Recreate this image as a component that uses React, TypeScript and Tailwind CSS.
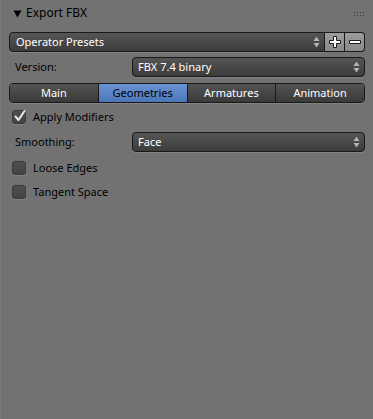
import React from "react";

const font = { fontFamily: '"Noto Sans", "Open Sans", sans-serif' };

function UpDown() {
  return (
    <svg width="7" height="12" viewBox="0 0 7 12" className="shrink-0">
      <path d="M3.5 0.5 L6.5 5 L0.5 5 Z" fill="#b4b4b4" />
      <path d="M3.5 11.5 L6.5 7 L0.5 7 Z" fill="#b4b4b4" />
    </svg>
  );
}

function Dropdown({ label, className = "" }: { label: string; className?: string }) {
  return (
    <div
      className={`h-[20px] flex items-center justify-between pl-[5px] pr-[4px] rounded-[4px] border border-[#191919] bg-gradient-to-b from-[#555555] to-[#3c3c3c] text-[#ffffff] shadow-[0_1px_0_rgba(255,255,255,0.12)] ${className}`}
    >
      <span>{label}</span>
      <UpDown />
    </div>
  );
}

function Checkbox({ checked }: { checked?: boolean }) {
  return (
    <div className="relative w-[14px] h-[14px] rounded-[3px] border border-[#3a3a3a] bg-gradient-to-b from-[#4f4f4f] to-[#434343] shrink-0 shadow-[0_1px_0_rgba(255,255,255,0.1)]">
      {checked && (
        <svg width="14" height="14" viewBox="0 0 14 14" className="absolute left-[0px] top-[-2px]">
          <path d="M2.5 7.5 L5.5 11 L11.5 2" fill="none" stroke="#ececec" strokeWidth="2" strokeLinejoin="round" strokeLinecap="round" />
        </svg>
      )}
    </div>
  );
}

function Tab({ label, active, first, last }: { label: string; active?: boolean; first?: boolean; last?: boolean }) {
  const round = first ? "rounded-l-[3px]" : last ? "rounded-r-[3px]" : "";
  const bg = active
    ? "bg-gradient-to-b from-[#6a93d3] to-[#4c76b8] text-[#000000]"
    : "bg-gradient-to-b from-[#535353] to-[#3a3a3a] text-[#ffffff]";
  return (
    <div className={`flex-1 h-full flex items-center justify-center border-r border-[#191919] last:border-r-0 ${round} ${bg}`}>
      {label}
    </div>
  );
}

export default function App() {
  return (
    <div
      className="w-[373px] h-[419px] bg-[#727272] text-[11px] overflow-hidden border-l border-[#7a7a7a]"
      style={font}
    >
      <div className="h-[26px] flex items-center pl-[12px] pr-[9px] text-[#000000] text-[12px]">
        <svg width="9" height="8" viewBox="0 0 9 8" className="mt-[1px]">
          <path d="M0.5 0.5 L8.5 0.5 L4.5 7.5 Z" fill="#000" />
        </svg>
        <span className="ml-[4px]">Export FBX</span>
        <div className="ml-auto grid grid-cols-4 gap-x-[2px] gap-y-[2px] mt-[1px]">
          {Array.from({ length: 8 }).map((_, i) => (
            <div key={i} className="w-[1px] h-[1px] bg-[#3a3a3a]" />
          ))}
        </div>
      </div>

      <div className="px-[8px]">
        <div className="mt-[6px] h-[20px] flex">
          <div className="flex-1 h-full flex items-center justify-between pl-[6px] pr-[4px] rounded-l-[4px] border border-[#191919] bg-gradient-to-b from-[#555555] to-[#3c3c3c] text-white shadow-[0_1px_0_rgba(255,255,255,0.12)]">
            <span>Operator Presets</span>
            <UpDown />
          </div>
          <div className="w-[20px] h-full flex items-center justify-center border-y border-r border-[#191919] bg-gradient-to-b from-[#9c9c9c] to-[#8a8a8a]">
            <svg width="14" height="14" viewBox="0 0 14 14">
              <path d="M5.5 1.5 H8.5 V5.5 H12.5 V8.5 H8.5 V12.5 H5.5 V8.5 H1.5 V5.5 H5.5 Z" fill="#fff" stroke="#1a1a1a" strokeWidth="1" />
            </svg>
          </div>
          <div className="w-[20px] h-full flex items-center justify-center rounded-r-[4px] border-y border-r border-[#191919] bg-gradient-to-b from-[#9c9c9c] to-[#8a8a8a]">
            <svg width="14" height="14" viewBox="0 0 14 14">
              <path d="M1.5 5.5 H12.5 V8.5 H1.5 Z" fill="#fff" stroke="#1a1a1a" strokeWidth="1" />
            </svg>
          </div>
        </div>

        <div className="mt-[5px] h-[20px] flex items-center">
          <span className="w-[123px] pl-[6px] text-[#000]">Version:</span>
          <Dropdown label="FBX 7.4 binary" className="flex-1" />
        </div>

        <div className="mt-[6px] h-[20px] flex rounded-[4px] border border-[#191919] shadow-[0_1px_0_rgba(255,255,255,0.12)]">
          <Tab label="Main" first />
          <Tab label="Geometries" active />
          <Tab label="Armatures" />
          <Tab label="Animation" last />
        </div>

        <div className="mt-[2px] h-[24px] flex items-center pl-[3px] gap-[7px] text-[#000]">
          <Checkbox checked />
          <span>Apply Modifiers</span>
        </div>

        <div className="mt-[3px] h-[20px] flex items-center">
          <span className="w-[123px] pl-[6px] text-[#000]">Smoothing:</span>
          <Dropdown label="Face" className="flex-1" />
        </div>

        <div className="mt-[4px] h-[24px] flex items-center pl-[3px] gap-[7px] text-[#000]">
          <Checkbox />
          <span>Loose Edges</span>
        </div>
        <div className="h-[24px] flex items-center pl-[3px] gap-[7px] text-[#000]">
          <Checkbox />
          <span>Tangent Space</span>
        </div>
      </div>
    </div>
  );
}
